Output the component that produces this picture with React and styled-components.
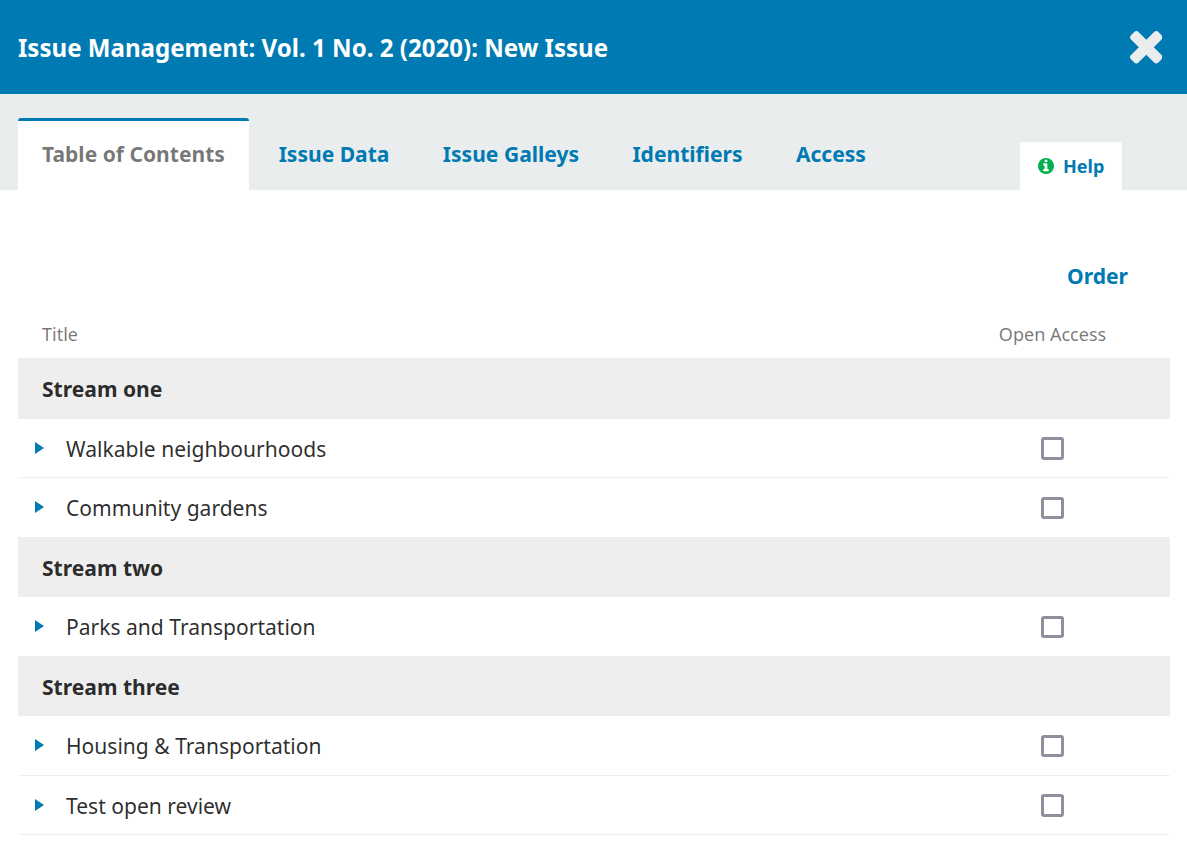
import React, { useState } from "react";
import styled, { createGlobalStyle } from "styled-components";

const GlobalStyle = createGlobalStyle`
  * { box-sizing: border-box; }
  body {
    margin: 0;
    background: #fff;
    color: rgba(0, 0, 0, 0.84);
    font: 400 21.06px/30px "Noto Sans", sans-serif;
  }
`;

const Modal = styled.div`
  min-height: 867px;
`;

const Header = styled.header`
  display: flex;
  align-items: center;
  justify-content: space-between;
  height: 94px;
  padding: 1px 24.7px 0 18px;
  background: #007ab2;
  color: #fff;
`;

const Heading = styled.h1`
  margin: 1px 0 0;
  font-size: 24.08px;
  line-height: 36px;
  font-weight: 700;
`;

const CloseButton = styled.button`
  display: flex;
  padding: 0;
  border: 0;
  background: none;
  color: #eaedee;
`;

const TabBar = styled.nav`
  display: flex;
  align-items: flex-end;
  height: 96px;
  padding: 0 65px 0 18px;
  background: #eaedee;
`;

const Tab = styled.a`
  height: 72px;
  padding: 0 24px;
  margin-right: 5.4px;
  border-top: 3px solid ${(p) => (p.$active ? "#007ab2" : "transparent")};
  border-radius: 3px 3px 0 0;
  background: ${(p) => (p.$active ? "#fff" : "transparent")};
  color: ${(p) => (p.$active ? "rgba(0,0,0,.54)" : "#007ab2")};
  line-height: 66px;
  font-weight: 700;
  white-space: nowrap;

  &:first-child {
    padding-right: 24.4px;
  }
`;

const Help = styled.a`
  display: flex;
  align-items: center;
  gap: 9px;
  width: 102px;
  height: 48px;
  margin-left: auto;
  padding-left: 18px;
  border-radius: 3px 3px 0 0;
  background: #fff;
  color: #007ab2;
  font-size: 18px;
  font-weight: 700;
  svg { color: #00b24e; }
`;

const Content = styled.main`
  padding: 71px 17px 0 18px;
`;

const Actions = styled.div`
  display: flex;
  justify-content: flex-end;
  padding-right: 42px;
  color: #007ab2;
  font-weight: 700;
`;

const Grid = styled.div`
  display: grid;
  grid-template-columns: 917px 235px;
`;

const GridRow = styled.div`
  display: grid;
  grid-column: 1 / -1;
  grid-template-columns: subgrid;
  align-items: center;
  height: ${(p) => p.$height}px;
`;

const HeadRow = styled(GridRow)`
  margin-top: 19px;
  color: rgba(0, 0, 0, 0.54);
  font-size: 18px;
  line-height: 27px;
`;

const CategoryRow = styled(GridRow)`
  padding-top: ${(p) => p.$offset}px;
  background: #eee;
  font-weight: 700;
`;

const ItemRow = styled(GridRow)`
  align-items: start;
  border-bottom: ${(p) => (p.$divided ? "1px solid #eee" : "0")};

  &:last-child {
    border-radius: 0 0 3px 3px;
  }
`;

const Cell = styled.div`
  padding-left: 24px;
`;

const ItemTitle = styled.div`
  display: flex;
  padding: 15px 0 0 17px;
`;

const Arrow = styled.span`
  display: flex;
  width: 31px;
  padding-top: 8px;
  color: #007ab2;
`;

const CenterCell = styled.div`
  display: flex;
  justify-content: center;
`;

const CheckCell = styled(CenterCell)`
  padding-top: ${(p) => p.$top}px;
`;

const Checkbox = styled.input`
  appearance: none;
  width: 23px;
  height: ${(p) => p.$size}px;
  margin: 0;
  border: 3px solid #8f8f9d;
  border-radius: 3px;
  background: #fff;
`;

const tabs = ["Table of Contents", "Issue Data", "Issue Galleys", "Identifiers", "Access"];

const sections = [
  {
    name: "Stream one", height: 61, offset: 1,
    items: [
      { title: "Walkable neighbourhoods", height: 59, top: 18, box: 23, divided: true },
      { title: "Community gardens", height: 59, top: 19, box: 22 },
    ],
  },
  {
    name: "Stream two", height: 60, offset: 2,
    items: [{ title: "Parks and Transportation", height: 59, top: 19, box: 22 }],
  },
  {
    name: "Stream three", height: 60, offset: 2,
    items: [
      { title: "Housing & Transportation", height: 60, top: 19, box: 22, divided: true },
      { title: "Test open review", height: 59, top: 18, box: 23, divided: true },
    ],
  },
];

function Triangle() {
  return (
    <svg width="10" height="12" viewBox="0 0 10 12" fill="currentColor">
      <path d="M0 0 L9 6 L0 12 Z" />
    </svg>
  );
}

function CloseIcon() {
  return (
    <svg width="32.6" height="32.6" viewBox="302 366 1188 1188" fill="currentColor">
      <path d="M1490 1322q0 40-28 68l-136 136q-28 28-68 28t-68-28l-294-294-294 294q-28 28-68 28t-68-28l-136-136q-28-28-28-68t28-68l294-294-294-294q-28-28-28-68t28-68l136-136q28-28 68-28t68 28l294 294 294-294q28-28 68-28t68 28l136 136q28 28 28 68t-28 68l-294 294 294 294q28 28 28 68z" />
    </svg>
  );
}

function InfoIcon() {
  return (
    <svg width="16" height="16" viewBox="128 128 1536 1536" fill="currentColor">
      <path d="M1152 1376v-160q0-14-9-23t-23-9h-96v-512q0-14-9-23t-23-9h-320q-14 0-23 9t-9 23v160q0 14 9 23t23 9h96v320h-96q-14 0-23 9t-9 23v160q0 14 9 23t23 9h448q14 0 23-9t9-23zm-128-896v-160q0-14-9-23t-23-9h-192q-14 0-23 9t-9 23v160q0 14 9 23t23 9h192q14 0 23-9t9-23zm640 416q0 209-103 385.500t-279.500 279.500-385.500 103-385.500-103-279.500-279.500-103-385.500 103-385.500 279.500-279.500 385.500-103 385.500 103 279.500 279.500 103 385.500z" />
    </svg>
  );
}

export default function App() {
  const [active, setActive] = useState(tabs[0]);
  return (
    <>
      <GlobalStyle />
      <Modal>
        <Header>
          <Heading>Issue Management: Vol. 1 No. 2 (2020): New Issue</Heading>
          <CloseButton aria-label="Close"><CloseIcon /></CloseButton>
        </Header>
        <TabBar>
          {tabs.map((t) => (
            <Tab key={t} $active={t === active} onClick={() => setActive(t)}>{t}</Tab>
          ))}
          <Help><InfoIcon />Help</Help>
        </TabBar>
        <Content>
          <Actions>Order</Actions>
          <Grid>
            <HeadRow $height={48}>
              <Cell>Title</Cell>
              <CenterCell>Open Access</CenterCell>
            </HeadRow>
            {sections.map((s) => (
              <React.Fragment key={s.name}>
                <CategoryRow $height={s.height} $offset={s.offset}><Cell>{s.name}</Cell></CategoryRow>
                {s.items.map((item) => (
                  <ItemRow key={item.title} $height={item.height} $divided={item.divided}>
                    <ItemTitle><Arrow><Triangle /></Arrow>{item.title}</ItemTitle>
                    <CheckCell $top={item.top}>
                      <Checkbox type="checkbox" aria-label={item.title} $size={item.box} />
                    </CheckCell>
                  </ItemRow>
                ))}
              </React.Fragment>
            ))}
          </Grid>
        </Content>
      </Modal>
    </>
  );
}
